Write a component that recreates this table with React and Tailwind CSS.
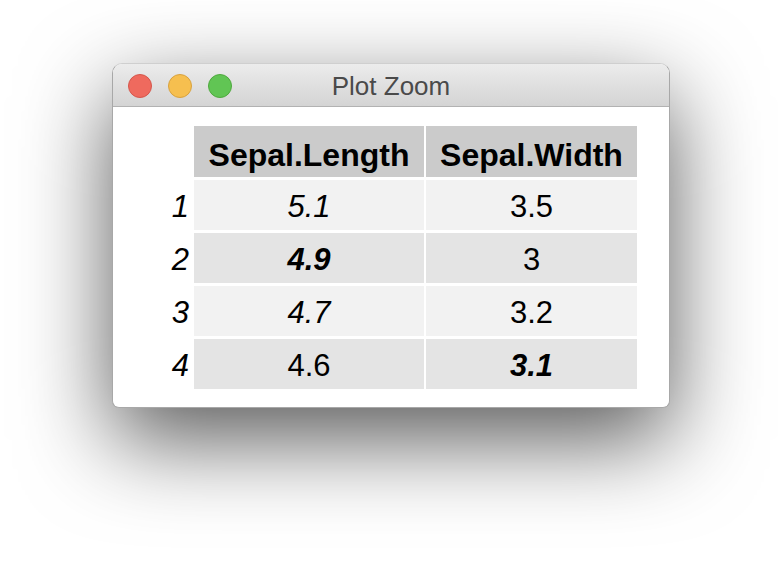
const rows = [
  { label: "1", a: "5.1", aStyle: "italic", b: "3.5", bStyle: "", bg: "bg-[#f2f2f2]" },
  { label: "2", a: "4.9", aStyle: "italic font-bold", b: "3", bStyle: "", bg: "bg-[#e4e4e4]" },
  { label: "3", a: "4.7", aStyle: "italic", b: "3.2", bStyle: "", bg: "bg-[#f2f2f2]" },
  { label: "4", a: "4.6", aStyle: "", b: "3.1", bStyle: "italic font-bold", bg: "bg-[#e4e4e4]" },
];

const Light = ({ fill, ring }) => (
  <span
    className={`block w-[24px] h-[24px] rounded-full border ${fill} ${ring}`}
  />
);

const App = () => {
  return (
    <div
      className="w-[782px] h-[568px] bg-white pt-[63px] pl-[112px] overflow-hidden"
      style={{ fontFamily: '"Liberation Sans", Arial, sans-serif' }}
    >
      <div className="w-[558px] h-[345px] bg-white flex flex-col rounded-t-[10px] rounded-b-[7px] border border-[#a8a8a8] border-t-[#cfcfcf] shadow-[0_32px_90px_rgba(0,0,0,0.65)] overflow-hidden">
        <div className="relative h-[43px] shrink-0 flex items-center bg-gradient-to-b from-[#ececec] to-[#d4d4d4] border-b border-[#b2b2b2]">
          <div className="flex items-center gap-[16px] pl-[15px] pt-[1px]">
            <Light fill="bg-[#ef6a5e]" ring="border-[#d5574c]" />
            <Light fill="bg-[#f6bf4f]" ring="border-[#d8a23f]" />
            <Light fill="bg-[#61c554]" ring="border-[#4fa93e]" />
          </div>
          <div className="absolute inset-0 flex items-center justify-center pt-[2px] text-[26px] text-[#4a4a4a]">
            Plot Zoom
          </div>
        </div>

        <div className="pt-[19px]">
          <div className="grid grid-cols-[79px_230px_211px] gap-x-[2px] gap-y-[3px] text-[31px] text-black">
            <div />
            <div className="h-[51px] bg-[#cbcbcb] flex items-center justify-center pt-[6px] text-[32px] font-bold">
              Sepal.Length
            </div>
            <div className="h-[51px] bg-[#cbcbcb] flex items-center justify-center pt-[6px] text-[32px] font-bold">
              Sepal.Width
            </div>
            {rows.map((r) => (
              <div key={r.label} className="contents">
                <div className="h-[50px] flex items-center justify-end pr-[3px] pt-[4px] italic">
                  {r.label}
                </div>
                <div className={`h-[50px] flex items-center justify-center pt-[4px] ${r.bg} ${r.aStyle}`}>
                  {r.a}
                </div>
                <div className={`h-[50px] flex items-center justify-center pt-[4px] ${r.bg} ${r.bStyle}`}>
                  {r.b}
                </div>
              </div>
            ))}
          </div>
        </div>
      </div>
    </div>
  );
};

export default App;
